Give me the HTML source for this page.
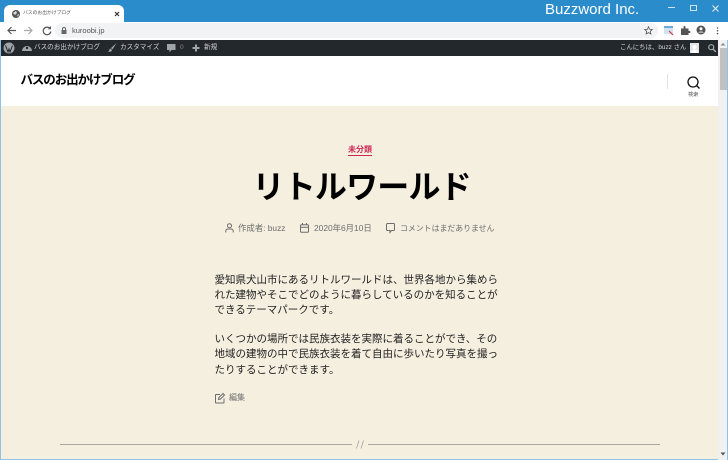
<!DOCTYPE html>
<html lang="ja"><head><meta charset="utf-8"><style>
*{box-sizing:border-box}
html,body{margin:0;padding:0;width:728px;height:460px;overflow:hidden;background:#f5efe0}
body{font-family:"Liberation Sans","Noto Sans CJK JP",sans-serif;position:relative}
.a{position:absolute;white-space:nowrap}
svg{position:absolute;overflow:visible}
</style></head><body>
<div class="a" style="left:0;top:0;width:728px;height:22px;background:#2a8ccb"></div>
<div class="a" style="left:4px;top:5px;width:120px;height:18px;background:#fff;border-radius:6px 6px 0 0"></div>
<div class="a" style="left:23px;top:8px;font-size:4.8px;line-height:11px;color:#555">バスのお出かけブログ</div>
<svg style="left:11px;top:9px" width="10" height="10"><circle cx="5" cy="5" r="4" fill="#555"/><path d="M2 4l3-2 1 2-2 2zM6 6l2-1-1 3z" fill="#ddd"/></svg>
<svg style="left:113px;top:10px" width="8" height="8"><path d="M2 2l4 4M6 2l-4 4" stroke="#333" stroke-width="1.2"/></svg>
<div class="a" style="left:545px;top:0;font-size:15px;line-height:20px;color:#fff">Buzzword Inc.</div>
<div class="a" style="left:668px;top:7px;width:7px;height:1px;background:#cfe4f3"></div>
<div class="a" style="left:690px;top:5px;width:7px;height:6px;border:1px solid #cfe4f3"></div>
<svg style="left:712px;top:5px" width="7" height="7"><path d="M.5.5l6 6M6.500.5l-6 6" stroke="#e6f1f9" stroke-width="1"/></svg>

<div class="a" style="left:0;top:22px;width:728px;height:18px;background:#fff"></div>
<div class="a" style="left:55px;top:23px;width:603px;height:15px;background:#f1f3f4;border-radius:8px"></div>
<svg style="left:6px;top:25px" width="50" height="12" fill="none"><path d="M10 5.500H2.500M5.500 2L2 5.500 5.500 9" stroke="#555" stroke-width="1.200"/><path d="M18 5.500h7.500M22.500 2L26 5.500 22.500 9" stroke="#aaa" stroke-width="1.200"/><path d="M44 3.500a3.800 3.800 0 1 0 .8 3" stroke="#555" stroke-width="1.200"/><path d="M45 1v3.200h-3.200z" fill="#555"/></svg>
<svg style="left:61px;top:27px" width="6" height="7"><rect x=".5" y="3" width="5" height="4" fill="#666"/><path d="M1.500 3V2a1.500 1.500 0 0 1 3 0v1" stroke="#666" fill="none"/></svg>
<div class="a" style="left:72px;top:24px;font-size:7.500px;line-height:13px;color:#555">kuroobi.jp</div>
<svg style="left:644px;top:26px" width="9" height="9" fill="none"><path d="M4.500.8l1.100 2.500 2.700.2-2 1.800.6 2.700-2.400-1.400-2.400 1.400.6-2.700-2-1.800 2.700-.2z" stroke="#555" stroke-width=".8"/></svg>
<div class="a" style="left:664px;top:26px;width:9px;height:8px;background:#cfe3f5;border-top:2px solid #6fa8dc"></div>
<svg style="left:669px;top:31px" width="5" height="5"><path d="M0 0l4 4" stroke="#d33" stroke-width="1.200"/></svg>
<svg style="left:681px;top:26px" width="9" height="9"><path d="M0 2.500h2.500V1a1 1 0 0 1 2 0v1.500H7.500V5h1a1 1 0 0 1 0 2h-1v2H0z" fill="#555"/></svg>
<svg style="left:696px;top:25px" width="10" height="10"><circle cx="5" cy="5" r="4.500" fill="#555"/><circle cx="5" cy="3.800" r="1.500" fill="#fff"/><path d="M2.200 7.500a3.200 2 0 0 1 5.600 0z" fill="#fff"/></svg>
<svg style="left:716px;top:27px" width="3" height="9"><circle cx="1.500" cy="1" r=".8" fill="#555"/><circle cx="1.500" cy="3.800" r=".8" fill="#555"/><circle cx="1.500" cy="6.600" r=".8" fill="#555"/></svg>

<div class="a" style="left:0;top:40px;width:728px;height:16px;background:#23282d"></div>
<svg style="left:3px;top:42px" width="12" height="12"><circle cx="6" cy="6" r="5.500" fill="#a0a5aa"/><path d="M2.500 3.500l2.500 6.500 1-3 1 3 2.500-6.500" stroke="#23282d" fill="none" stroke-width="1"/></svg>
<svg style="left:22px;top:43px" width="10" height="9"><path d="M0 8a5 5 0 1 1 10 0z" fill="#a0a5aa"/><circle cx="5" cy="5" r="1.200" fill="#23282d"/></svg>
<div class="a" style="left:34px;top:41px;font-size:6.600px;line-height:14px;color:#d5d7d8">バスのお出かけブログ</div>
<svg style="left:108px;top:43px" width="9" height="9"><path d="M8.500 0L3 5l1.500 1.500zM2.500 5.500C1 6 1.500 8 0 8.500c2 .8 4 0 4-1.500z" fill="#a0a5aa"/></svg>
<div class="a" style="left:120px;top:41px;font-size:6.600px;line-height:14px;color:#d5d7d8">カスタマイズ</div>
<svg style="left:167px;top:44px" width="9" height="9"><path d="M0 0h8.500v6H4.500L2.500 8.500V6H0z" fill="#a0a5aa"/></svg>
<div class="a" style="left:180px;top:41px;font-size:6.600px;line-height:14px;color:#888">0</div>
<svg style="left:192px;top:44px" width="8" height="8"><path d="M4 .5v7M.5 4h7" stroke="#a0a5aa" stroke-width="2"/></svg>
<div class="a" style="left:204px;top:41px;font-size:6.600px;line-height:14px;color:#d5d7d8">新規</div>
<div class="a" style="left:620px;top:41px;font-size:6.400px;line-height:14px;color:#d5d7d8">こんにちは、buzz さん</div>
<div class="a" style="left:690px;top:43px;width:9px;height:10px;background:#e5e5e5"></div>
<svg style="left:690px;top:43px" width="9" height="10"><circle cx="4.500" cy="4" r="2" fill="#fff"/><path d="M1 10a3.500 3.500 0 0 1 7 0z" fill="#fff"/></svg>
<svg style="left:708px;top:44px" width="8" height="8" fill="none"><circle cx="3.200" cy="3.200" r="2.500" stroke="#a0a5aa" stroke-width="1.200"/><path d="M5 5l2.800 2.800" stroke="#a0a5aa" stroke-width="1.500"/></svg>

<div class="a" style="left:1px;top:56px;width:717px;height:50px;background:#fff"></div>
<div class="a" style="left:20.500px;top:71px;font-size:12.500px;line-height:18px;font-weight:700;color:#000;letter-spacing:-1.100px">バスのお出かけブログ</div>
<div class="a" style="left:667px;top:74px;width:1px;height:15px;background:#e3e3e3"></div>
<svg style="left:687px;top:76px" width="13" height="13" fill="none"><circle cx="6" cy="6" r="5" stroke="#111" stroke-width="1.300"/><path d="M9.500 9.500l3 3" stroke="#111" stroke-width="1.300"/></svg>
<div class="a" style="left:688px;top:91px;font-size:5.200px;line-height:9px;color:#555">検索</div>

<div class="a" style="left:348px;top:144px;font-size:8px;line-height:11px;font-weight:700;color:#cd2653">未分類</div>
<div class="a" style="left:348px;top:155px;width:24px;height:1px;background:#cd2653"></div>
<div class="a" style="left:252.500px;top:166px;font-size:32px;line-height:42px;font-weight:700;color:#000;letter-spacing:-.8px">リトルワールド</div>

<svg style="left:225px;top:223px" width="9" height="10" fill="none" stroke="#6d6d6d"><circle cx="4.500" cy="2.700" r="2"/><path d="M.8 9.500V8a2 2 0 0 1 2-2h3.400a2 2 0 0 1 2 2v1.500"/></svg>
<div class="a" style="left:238px;top:222px;font-size:8.400px;line-height:12px;color:#6d6d6d">作成者: buzz</div>
<svg style="left:300px;top:223px" width="9" height="10" fill="none" stroke="#6d6d6d"><rect x=".5" y="1.800" width="8" height="7.500" rx="1"/><path d="M.5 4.200h8M2.500 0v2M6.500 0v2"/></svg>
<div class="a" style="left:314px;top:222px;font-size:8.400px;line-height:12px;color:#6d6d6d">2020年6月10日</div>
<svg style="left:386px;top:223px" width="9" height="10" fill="none" stroke="#6d6d6d"><path d="M1.500.5h6a1 1 0 0 1 1 1v5a1 1 0 0 1-1 1h-2l-1.500 2v-2h-2.500a1 1 0 0 1-1-1v-5a1 1 0 0 1 1-1z"/></svg>
<div class="a" style="left:400px;top:223px;font-size:7.900px;line-height:12px;color:#6d6d6d">コメントはまだありません</div>

<div class="a" style="left:214.500px;top:273px;font-size:10.500px;line-height:15px;color:#222">愛知県犬山市にあるリトルワールドは、世界各地から集めら<br>れた建物やそこでどのように暮らしているのかを知ることが<br>できるテーマパークです。</div>
<div class="a" style="left:214.500px;top:331.500px;font-size:10.500px;line-height:15.500px;color:#222">いくつかの場所では民族衣装を実際に着ることができ、その<br>地域の建物の中で民族衣装を着て自由に歩いたり写真を撮っ<br>たりすることができます。</div>
<svg style="left:215px;top:393px" width="10" height="10" fill="none" stroke="#6d6d6d"><path d="M5 1.500H1a.5.5 0 0 0-.5.500v7.500a.5.500 0 0 0 .5.500h7.500a.5.500 0 0 0 .5-.5V5.500"/><path d="M3.500 6.500l.4-2L8 .5l1.500 1.500-4 4z"/></svg>
<div class="a" style="left:229px;top:392px;font-size:8px;line-height:11px;color:#6d6d6d">編集</div>

<div class="a" style="left:60px;top:444px;width:292px;height:1px;background:#a9a79e"></div>
<div class="a" style="left:368px;top:444px;width:292px;height:1px;background:#a9a79e"></div>
<svg style="left:356px;top:440px" width="9" height="9" fill="none" stroke="#999" stroke-width=".7"><path d="M.5 8.500L3 .5M5 8.500L7.500.5"/></svg>

<div class="a" style="left:0;top:40px;width:1px;height:420px;background:#8fc3e3"></div>
<div class="a" style="left:0;top:459px;width:728px;height:1px;background:#8fc3e3"></div>
<div class="a" style="left:727px;top:40px;width:1px;height:420px;background:#8fc3e3"></div>
<div class="a" style="left:718px;top:40px;width:9px;height:420px;background:#f1f1f1"></div>
<div class="a" style="left:720px;top:48px;width:7px;height:42px;background:#c1c1c1"></div>
<svg style="left:720px;top:42px" width="6" height="4"><path d="M3 1L.5 3.500h5z" fill="#888"/></svg>
<svg style="left:720px;top:452px" width="6" height="4"><path d="M.5 .5h5L3 3.500z" fill="#555"/></svg>
</body></html>
